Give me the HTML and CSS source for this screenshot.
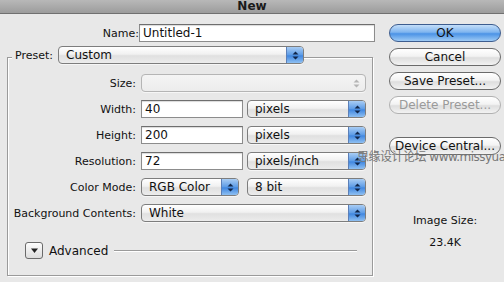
FILE: index.html
```html
<!DOCTYPE html>
<html>
	<head>
		<meta charset="UTF-8">
		<title>New</title>
		<link rel="stylesheet" href="styles.css">
	</head>
	<body>
		<div class="dlg">
			<div class="titlebar">New</div>

			<div class="main">
				<div class="left">
					<div class="namerow">
						<span class="lbl name_lbl">Name:</span>
						<span class="field name_field">Untitled-1</span>
					</div>

					<div class="presetrow">
						<span class="preset_lbl">Preset:</span>
						<span class="popup preset_pop">Custom<i class="arr"><svg width="9" height="11" viewBox="0 0 9 11"><path d="M1.5 4.5 4.5 1.5 7.5 4.5Z M1.5 6.5 4.5 9.5 7.5 6.5Z" fill="#10264a"/></svg></i></span>
					</div>

					<div class="group">
						<div class="frow">
							<span class="lbl">Size:</span>
							<span class="popup dis wide"><i class="arr"><svg width="9" height="11" viewBox="0 0 9 11"><path d="M1.5 4.5 4.5 1.5 7.5 4.5Z M1.5 6.5 4.5 9.5 7.5 6.5Z" fill="#b4b4b4"/></svg></i></span>
						</div>
						<div class="frow">
							<span class="lbl">Width:</span>
							<span class="field num">40</span>
							<span class="popup unit">pixels<i class="arr"><svg width="9" height="11" viewBox="0 0 9 11"><path d="M1.5 4.5 4.5 1.5 7.5 4.5Z M1.5 6.5 4.5 9.5 7.5 6.5Z" fill="#10264a"/></svg></i></span>
						</div>
						<div class="frow">
							<span class="lbl">Height:</span>
							<span class="field num">200</span>
							<span class="popup unit">pixels<i class="arr"><svg width="9" height="11" viewBox="0 0 9 11"><path d="M1.5 4.5 4.5 1.5 7.5 4.5Z M1.5 6.5 4.5 9.5 7.5 6.5Z" fill="#10264a"/></svg></i></span>
						</div>
						<div class="frow">
							<span class="lbl">Resolution:</span>
							<span class="field num">72</span>
							<span class="popup unit">pixels/inch<i class="arr"><svg width="9" height="11" viewBox="0 0 9 11"><path d="M1.5 4.5 4.5 1.5 7.5 4.5Z M1.5 6.5 4.5 9.5 7.5 6.5Z" fill="#10264a"/></svg></i></span>
						</div>
						<div class="frow">
							<span class="lbl">Color Mode:</span>
							<span class="popup mode">RGB Color<i class="arr"><svg width="9" height="11" viewBox="0 0 9 11"><path d="M1.5 4.5 4.5 1.5 7.5 4.5Z M1.5 6.5 4.5 9.5 7.5 6.5Z" fill="#10264a"/></svg></i></span>
							<span class="popup unit">8 bit<i class="arr"><svg width="9" height="11" viewBox="0 0 9 11"><path d="M1.5 4.5 4.5 1.5 7.5 4.5Z M1.5 6.5 4.5 9.5 7.5 6.5Z" fill="#10264a"/></svg></i></span>
						</div>
						<div class="frow">
							<span class="lbl">Background Contents:</span>
							<span class="popup wide">White<i class="arr"><svg width="9" height="11" viewBox="0 0 9 11"><path d="M1.5 4.5 4.5 1.5 7.5 4.5Z M1.5 6.5 4.5 9.5 7.5 6.5Z" fill="#10264a"/></svg></i></span>
						</div>

						<div class="advrow">
							<span class="disc"><svg width="9" height="7" viewBox="0 0 9 7"><path d="M1 1.5H8L4.5 6Z" fill="#222"/></svg></span>
							<span class="adv_lbl">Advanced</span>
							<span class="adv_line"></span>
						</div>
					</div>
				</div>

				<div class="right">
					<span class="btn ok">OK</span>
					<span class="btn">Cancel</span>
					<span class="btn">Save Preset...</span>
					<span class="btn dis">Delete Preset...</span>
					<span class="btn central">Device Central...</span>
					<div class="isize">
						<div>Image Size:</div>
						<div>23.4K</div>
					</div>
				</div>
			</div>

			<span class="mark">思缘设计论坛 www.missyuan</span>
		</div>
	</body>
</html>
```

FILE: styles.css
```css
*{padding: 0;margin: 0;box-sizing: border-box;}

body{width: 504px;height: 282px;overflow: hidden;background: #e8e8e8;font-family: "DejaVu Sans", "Noto Sans CJK SC", sans-serif;font-size: 11px;color: #111;}

.dlg{position: relative;height: 282px;overflow: hidden;}

.titlebar{height: 14px;line-height: 12px;text-align: center;font-weight: bold;font-size: 12px;background: linear-gradient(#b8b8b8, #9c9c9c);border-bottom: 1px solid #707070;color: #1a1a1a;}

.main{display: flex;}

.left{width: 380px;padding-left: 7px;}

/* name + preset */
.namerow{display: flex;align-items: center;margin-top: 10px;height: 18px;}
.lbl{width: 133px;text-align: right;padding-right: 5px;flex: none;white-space: nowrap;}
.name_lbl{width: 132px;padding-right: 0;}
.name_field{margin-left: 0;width: 236px;}

.field{height: 18px;line-height: 17px;background: #fff;border: 1px solid #8c8c8c;border-top-color: #6e6e6e;padding-left: 3px;box-shadow: inset 0 1px 1px rgba(0,0,0,.15);font-size: 12px;}

.presetrow{display: flex;align-items: center;height: 18px;margin-top: 4px;padding-left: 5px;position: relative;}
.preset_lbl{background: #e8e8e8;padding: 0 5px 0 3px;}
.preset_pop{width: 246px;}

.popup{position: relative;display: flex;align-items: center;height: 18px;padding-left: 7px;border: 1px solid #7d7d7d;border-radius: 4px;background: linear-gradient(#ffffff, #f1f1f1 45%, #e0e0e0 55%, #ececec);font-size: 12px;box-shadow: 0 1px 0 rgba(255,255,255,.6);}
.popup .arr{margin-left: auto;width: 17px;height: 16px;display: flex;align-items: center;justify-content: center;border-left: 1px solid #5b7fb8;border-radius: 0 3px 3px 0;background: linear-gradient(#a9cdf4, #5c9be6 50%, #3f86e0 55%, #8fc0f2);}

.popup.dis{background: linear-gradient(#f4f4f4, #ececec);border-color: #b5b5b5;}
.popup.dis .arr{background: none;border-left: none;}

/* group box */
.group{margin-top: -7px;width: 366px;border: 1px solid #9a9a9a;box-shadow: 1px 1px 0 #fff, inset 1px 1px 0 #fff;padding: 16px 0 16px 0;}

.frow{display: flex;align-items: center;height: 18px;margin-bottom: 8px;}
.frow .wide{width: 225px;}
.num{width: 102px;margin-right: 4px;}
.unit{width: 119px;}
.mode{width: 98px;margin-right: 8px;}

.advrow{display: flex;align-items: center;height: 17px;margin-top: 20px;padding-left: 17px;}
.disc{width: 18px;height: 17px;border: 1px solid #6a6a6a;border-radius: 3px;background: linear-gradient(#fdfdfd, #dcdcdc);display: flex;align-items: center;justify-content: center;}
.adv_lbl{margin-left: 6px;font-size: 12px;}
.adv_line{flex: 1;margin: 0 15px 0 6px;height: 2px;border-top: 1px solid #9a9a9a;border-bottom: 1px solid #fff;}

/* buttons */
.right{width: 112px;margin-left: 9px;padding-top: 10px;display: flex;flex-direction: column;}
.btn{display: block;height: 18px;line-height: 16px;margin-bottom: 6px;text-align: center;border: 1px solid #6b6b6b;border-radius: 9px;background: linear-gradient(#ffffff, #f3f3f3 45%, #dedede 55%, #f2f2f2);font-size: 12px;}
.btn.ok{background: linear-gradient(#c4def9, #7fb5ef 45%, #4b93e6 55%, #9fcbf5);border-color: #3d5d8f;}
.btn.dis{color: #9a9a9a;border-color: #b1b1b1;}
.btn.central{margin-top: 17px;}

.isize{margin-top: 49px;text-align: center;line-height: 22px;}

.mark{position: absolute;left: 357px;top: 147px;font-size: 12px;color: #777;white-space: nowrap;letter-spacing: -0.5px;}
```
